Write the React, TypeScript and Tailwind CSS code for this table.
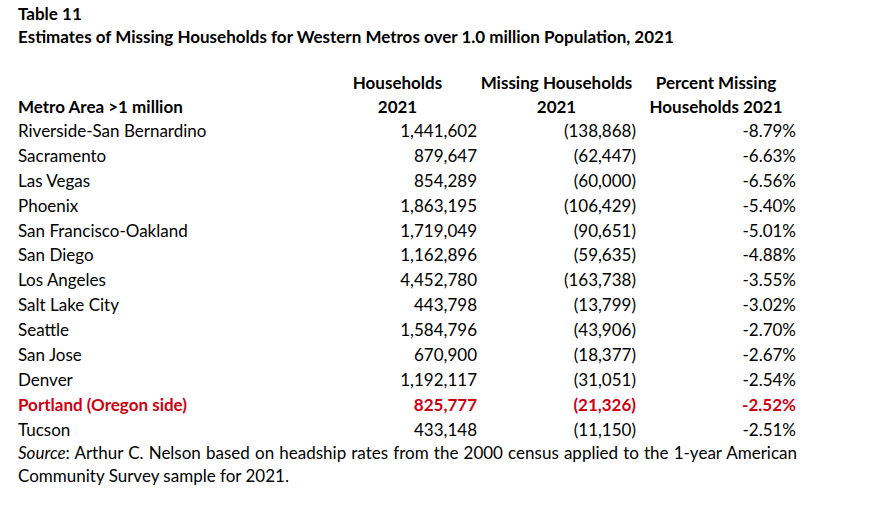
import React from "react";

type Row = { name: string; hh: string; miss: string; pct: string; hl?: boolean };

const rows: Row[] = [
  { name: "Riverside-San Bernardino", hh: "1,441,602", miss: "(138,868)", pct: "-8.79%" },
  { name: "Sacramento", hh: "879,647", miss: "(62,447)", pct: "-6.63%" },
  { name: "Las Vegas", hh: "854,289", miss: "(60,000)", pct: "-6.56%" },
  { name: "Phoenix", hh: "1,863,195", miss: "(106,429)", pct: "-5.40%" },
  { name: "San Francisco-Oakland", hh: "1,719,049", miss: "(90,651)", pct: "-5.01%" },
  { name: "San Diego", hh: "1,162,896", miss: "(59,635)", pct: "-4.88%" },
  { name: "Los Angeles", hh: "4,452,780", miss: "(163,738)", pct: "-3.55%" },
  { name: "Salt Lake City", hh: "443,798", miss: "(13,799)", pct: "-3.02%" },
  { name: "Seattle", hh: "1,584,796", miss: "(43,906)", pct: "-2.70%" },
  { name: "San Jose", hh: "670,900", miss: "(18,377)", pct: "-2.67%" },
  { name: "Denver", hh: "1,192,117", miss: "(31,051)", pct: "-2.54%" },
  { name: "Portland (Oregon side)", hh: "825,777", miss: "(21,326)", pct: "-2.52%", hl: true },
  { name: "Tucson", hh: "433,148", miss: "(11,150)", pct: "-2.51%" },
];

export default function App() {
  return (
    <div className="w-[881px] h-[523px] bg-white text-black pl-[18px] pt-[2px] font-['Lato','Open_Sans',sans-serif] text-[17px] overflow-hidden">
      <div className="font-bold leading-[23px]">
        <div>Table 11</div>
        <div>Estimates of Missing Households for Western Metros over 1.0 million Population, 2021</div>
      </div>

      <div className="mt-[23px] grid grid-cols-[300px_159px_159px_160px] font-bold leading-[24px]">
        <div className="flex items-end">Metro Area &gt;1 million</div>
        <div className="text-center">Households<br />2021</div>
        <div className="text-center">Missing Households<br />2021</div>
        <div className="text-center">Percent Missing<br />Households 2021</div>
      </div>

      <div className="flex flex-col">
        {rows.map((r) => (
          <div
            key={r.name}
            className={
              "grid grid-cols-[300px_159px_159px_160px] h-[24.9px] leading-[24.9px] " +
              (r.hl ? "font-bold text-[#cc0011]" : "")
            }
          >
            <div>{r.name}</div>
            <div className="text-right">{r.hh}</div>
            <div className="text-right">{r.miss}</div>
            <div className="text-right">{r.pct}</div>
          </div>
        ))}
      </div>

      <div className="leading-[23.5px] -mt-[2px]">
        <div className="w-[779px] text-justify [text-align-last:justify] whitespace-nowrap">
          <span className="italic">Source</span>: Arthur C. Nelson based on headship rates from the 2000 census applied to the 1-year American
        </div>
        <div>Community Survey sample for 2021.</div>
      </div>
    </div>
  );
}
